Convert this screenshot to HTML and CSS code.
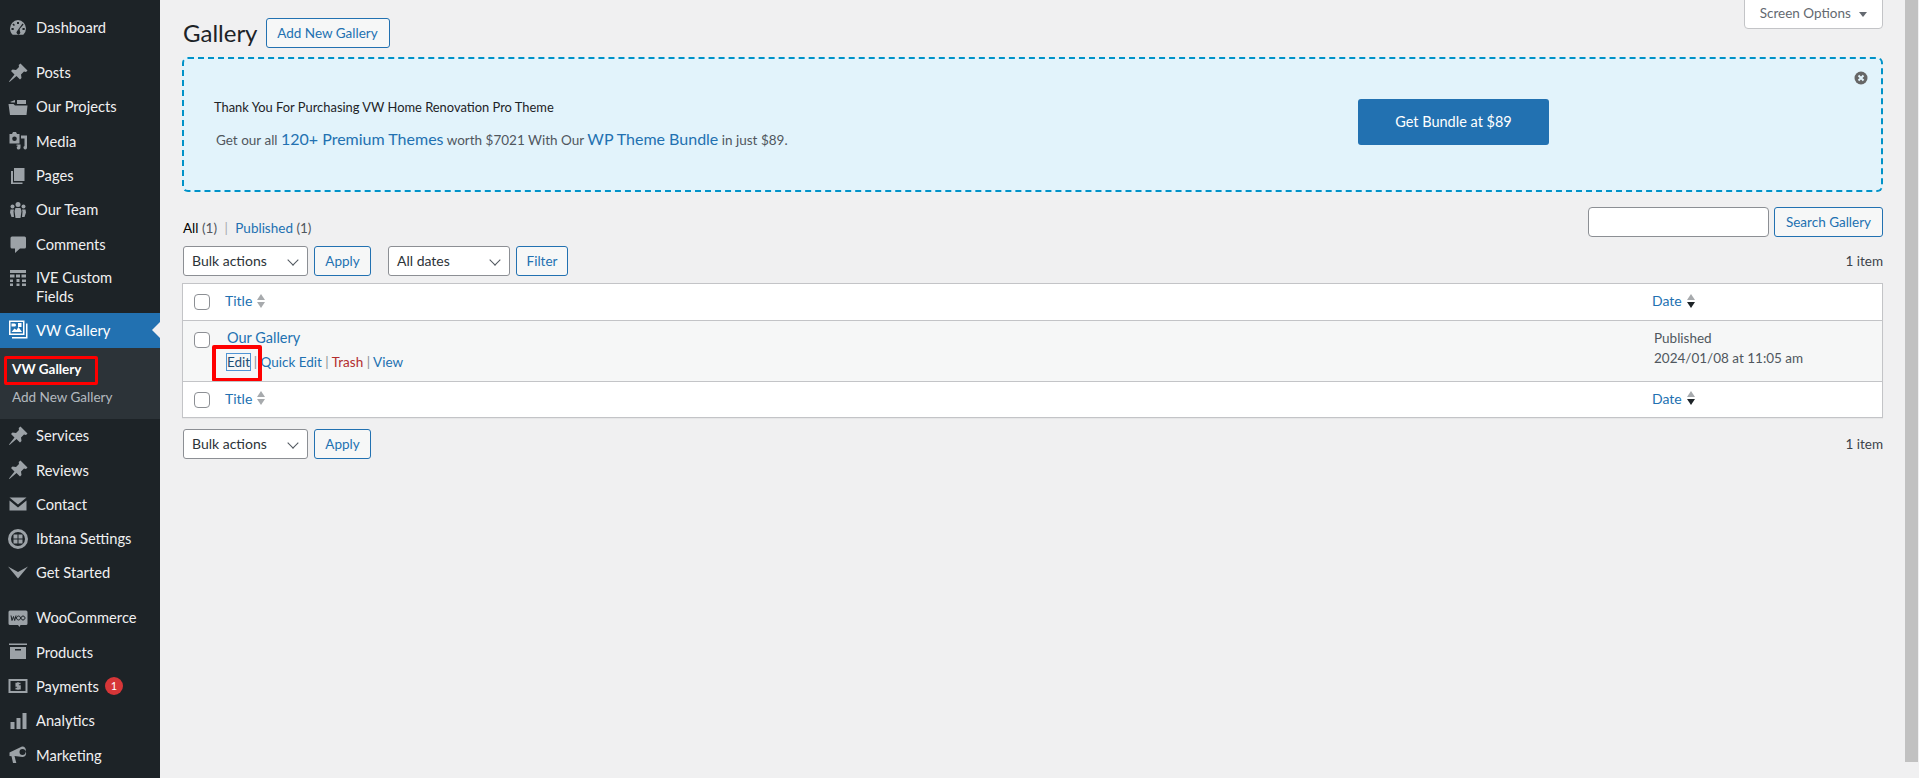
FILE: index.html
```html
<!DOCTYPE html>
<html lang="en">
<head>
<meta charset="utf-8">
<title>Gallery</title>
<link rel="stylesheet" href="styles.css">
</head>
<body>
<div class="shell">
  <nav class="menu">
    <a class="item first"><svg class="ic" viewBox="0 0 20 20"><path fill-rule="evenodd" d="M10 2a8.500 8.500 0 0 0-8 8.500c0 2.500 1 4.700 2.700 6.200h10.600A8.300 8.300 0 0 0 18 10.500 8.500 8.500 0 0 0 10 2zM9 4h2v2H9zM5.500 5.500l1.500 1.400-1.100 1.200-1.500-1.500zm9 0 1.100 1.100-4 4.400.4 2.500a1.900 1.900 0 1 1-3-.2zM3.500 10h2.200v2H3.500zm11 0h2.200v2h-2.200z"/></svg><span>Dashboard</span></a>
    <a class="item sep"><svg class="ic" viewBox="0 0 20 20"><use href="#pin"/></svg><span>Posts</span></a>
    <a class="item"><svg class="ic" viewBox="0 0 20 20"><path d="M.5 7h5l1.500 1.500h12.500l-1 9.500H2z"/><path d="M2 5l5-2v2.500H3.500zM9 3h9v4H9z"/></svg><span>Our Projects</span></a>
    <a class="item"><svg class="ic" viewBox="0 0 20 20"><path fill-rule="evenodd" d="M1.500 3h2.500l1-2h3l1 2h2.500v9.500h-10zm5 2.500a2.300 2.300 0 1 0 0 4.600 2.300 2.300 0 0 0 0-4.600z"/><path d="M13 4.500h6v12.200a1.800 1.800 0 1 1-2.500-1.700V7.500H13zM8.500 13.500h4v3.200a1.900 1.900 0 1 1-2.500-1.800V14.800H8.500z"/></svg><span>Media</span></a>
    <a class="item"><svg class="ic" viewBox="0 0 20 20"><path d="M6 2h10.500v13H6z"/><path d="M3 5h2v11.500h9.500V18H3z"/></svg><span>Pages</span></a>
    <a class="item"><svg class="ic" viewBox="0 0 20 20"><circle cx="10" cy="4.500" r="2.500"/><circle cx="4.500" cy="6.500" r="2"/><circle cx="15.500" cy="6.500" r="2"/><path d="M7.500 8h5l1 3-1 7H7.500l-1-7zM2.500 9.500h3.500l-.5 2 .5 5.500H3.500L2 12.500zM14 9.500h3.500l.5 3-1.500 4.500H14l.5-5.500z"/></svg><span>Our Team</span></a>
    <a class="item"><svg class="ic" viewBox="0 0 20 20"><path d="M4 2.500h12.500A1.500 1.500 0 0 1 18 4v9a1.500 1.500 0 0 1-1.500 1.500h-4.500L7 19v-4.500H4A1.500 1.500 0 0 1 2.500 13V4A1.500 1.500 0 0 1 4 2.500z"/></svg><span>Comments</span></a>
    <a class="item tall"><svg class="ic" viewBox="0 0 20 20"><path d="M2 2h16v3H2zM2 6.500h4.500v3H2zM8 6.500h4v3H8zM13.500 6.500H18v3h-4.500zM2 11.500h3v2.500H2zM8.500 11h3v3h-3zM14 11.500h4V14h-4zM2 15.500h3V18H2zM8.500 15.500h3V18h-3zM14 15.500h4V18h-4z"/></svg><span>IVE Custom Fields</span></a>
    <a class="item active"><svg class="ic" viewBox="0 0 20 20"><path fill-rule="evenodd" d="M1 .5h15.500V15H1zM2.500 2v11.500H15V2z"/><path d="M3.500 3.500h3a1.500 1.500 0 0 1 0 3h-3zM3.500 12l3-3.500 2 1.500 2-3 3.500 5z"/><path d="M10 3h3.500v4H10z"/><path d="M18 3.500V17H4v1.500h15.500V3.500z"/></svg><span>VW Gallery</span></a>
    <div class="sub">
      <a class="subitem current">VW Gallery</a>
      <a class="subitem">Add New Gallery</a>
      <i class="mark mark-sub"></i>
    </div>
    <a class="item"><svg class="ic" viewBox="0 0 20 20"><use href="#pin"/></svg><span>Services</span></a>
    <a class="item"><svg class="ic" viewBox="0 0 20 20"><use href="#pin"/></svg><span>Reviews</span></a>
    <a class="item"><svg class="ic" viewBox="0 0 20 20"><path d="M1.500 3.500h17L10 10.500zM1.500 6.500 10 13.500l8.500-7V16.500h-17z"/></svg><span>Contact</span></a>
    <a class="item"><svg class="ic" viewBox="0 0 20 20"><path fill-rule="evenodd" d="M10 0a10 10 0 1 0 0 20 10 10 0 0 0 0-20zm0 3a7 7 0 1 1 0 14 7 7 0 0 1 0-14z"/><path d="M5.500 5.500h4v4h-4zM10.500 5.500h4v4h-4zM5.500 10.500h4v4h-4zM10.500 10.500h4v4h-4z"/></svg><span>Ibtana Settings</span></a>
    <a class="item"><svg class="ic" viewBox="0 0 20 20"><path d="M0 3.500l10 5.500 10-5.500-10 12z"/></svg><span>Get Started</span></a>
    <a class="item sep"><svg class="ic" viewBox="0 0 20 20"><path d="M2 2.500h16a1.500 1.500 0 0 1 1.500 1.500v11.500A1.500 1.500 0 0 1 18 17h-5.500l-1 2-1.500-2H2A1.500 1.500 0 0 1 .5 15.500V4A1.500 1.500 0 0 1 2 2.500z"/><path class="cut" d="M3 7.500l1 5 1.500-4 1.200 4 1.300-5M10.500 8a2 2 0 1 0 .01 0zM15 8a2 2 0 1 0 .01 0z"/></svg><span>WooCommerce</span></a>
    <a class="item"><svg class="ic" viewBox="0 0 20 20"><path fill-rule="evenodd" d="M1 1.500h18V3H1zM2 5h16v12H2zm5 2v1.500h6V7z"/></svg><span>Products</span></a>
    <a class="item"><svg class="ic" viewBox="0 0 20 20"><path fill-rule="evenodd" d="M.5 3h19v14H.5zm2 2v10h15V5z"/><path class="cutb" d="M12.500 7.500H8.300v2.500h3.600v2.600H7.500M10 6.300v7.500"/></svg><span>Payments</span><b class="badge">1</b></a>
    <a class="item"><svg class="ic" viewBox="0 0 20 20"><path d="M2.500 11h4v7h-4zM8.500 7h4v11h-4zM14.500 2h4v16h-4z"/></svg><span>Analytics</span></a>
    <a class="item"><svg class="ic" viewBox="0 0 20 20"><path fill-rule="evenodd" d="M14 1.500a3.500 3.500 0 0 1 3.500 5 3.500 3.500 0 0 1-3 5.500L6.500 11l1.800 7H5L3.500 11.200 1.500 11V7.500zM14.500 4a3 3 0 0 0 0 6 3 3 0 0 0 0-6z"/></svg><span>Marketing</span></a>
  </nav>

  <main class="content">
    <a class="screen-options">Screen Options <i class="tri"></i></a>
    <header class="head">
      <h1>Gallery</h1>
      <a class="btn">Add New Gallery</a>
    </header>

    <section class="notice">
      <div class="notice-text">
        <p class="thanks">Thank You For Purchasing VW Home Renovation Pro Theme</p>
        <p class="offer">Get our all <a>120+ Premium Themes</a> worth $7021 With Our <a>WP Theme Bundle</a> in just $89.</p>
      </div>
      <a class="bundle">Get Bundle at $89</a>
      <svg class="close" viewBox="0 0 14 14"><circle cx="7" cy="7" r="6.500" fill="#666"/><path d="M4.500 4.500l5 5m0-5l-5 5" stroke="#e2f3fb" stroke-width="2"/></svg>
    </section>

    <div class="filterline">
      <div class="views"><b>All</b> (1) <em>|</em> <a>Published</a> (1)</div>
      <div class="search"><input class="input" type="text" aria-label="Search"><a class="btn">Search Gallery</a></div>
    </div>

    <div class="tablenav">
      <div class="sel w125">Bulk actions</div>
      <a class="btn">Apply</a>
      <div class="sel w122 gap-left">All dates</div>
      <a class="btn">Filter</a>
      <span class="count">1 item</span>
    </div>

    <div class="table">
      <div class="row thead">
        <i class="check"></i><a class="col-title">Title <i class="sort"><u></u><s></s></i></a>
        <a class="col-date">Date <i class="sort on"><u></u><s></s></i></a>
      </div>
      <div class="row body">
        <i class="check"></i>
        <div class="col-title cell">
          <a class="name">Our Gallery</a>
          <div class="actions"><a class="focus">Edit</a> <em>|</em> <a>Quick Edit</a> <em>|</em> <a class="trash">Trash</a> <em>|</em> <a>View</a></div>
          <i class="mark mark-edit"></i>
        </div>
        <div class="col-date cell date">Published<br>2024/01/08 at 11:05 am</div>
      </div>
      <div class="row tfoot">
        <i class="check"></i><a class="col-title">Title <i class="sort"><u></u><s></s></i></a>
        <a class="col-date">Date <i class="sort on"><u></u><s></s></i></a>
      </div>
    </div>

    <div class="tablenav bottom">
      <div class="sel w125">Bulk actions</div>
      <a class="btn">Apply</a>
      <span class="count">1 item</span>
    </div>
  </main>
  <div class="scrollbar"></div>
</div>
<svg class="defs" aria-hidden="true"><defs><symbol id="pin" viewBox="0 0 20 20"><path d="M12.500 .5l7 7-1.500 1.500-2-.5-3 3 .5 3.500-1.500 1.500-3.500-3.500L1.500 19 1 18.500l5.500-7L3 8l1.500-1.500 3.500.5 3-3-.3-2z"/></symbol></defs></svg>
</body>
</html>
```
FILE: styles.css
```css
* { box-sizing: border-box; }
html, body { margin: 0; height: 100%; overflow: hidden; }
body { background: #f0f0f1; font-family: "Lato", "Noto Sans", sans-serif; font-size: 13.5px; color: #3c434a; }
a { color: #2271b1; text-decoration: none; }
.defs { display: none; }
.shell { position: relative; display: flex; height: 778px; }

.menu { width: 160px; flex: none; background: #1d2327; padding-top: 10.500px; display: flex; flex-direction: column; }
.item { display: flex; align-items: center; height: 34.3px; color: #f0f0f1; font-size: 14.7px; line-height: 19px; padding-left: 8px; }
.item span { margin-left: 8px; }
.item.sep { margin-top: 10.700px; }
.item.tall { align-items: flex-start; padding-top: 7px; height: 52px; }
.item.tall span { width: 110px; }
.ic { width: 20px; height: 20px; flex: none; fill: #9ca2a7; }
.cut { fill: none; stroke: #1d2327; stroke-width: 1; }
.cutb { fill: none; stroke: #9ca2a7; stroke-width: 1.700; }
.active { background: #2271b1; color: #fff; position: relative; }
.active .ic { fill: #fff; }
.active::after { content: ""; position: absolute; right: 0; top: 9px; border: 8px solid transparent; border-right-color: #f0f0f1; border-left-width: 0; }
.sub { position: relative; background: #2c3338; height: 71px; padding-top: 7px; display: flex; flex-direction: column; }
.subitem { height: 28px; line-height: 28px; padding-left: 12px; font-size: 13.5px; color: rgba(240,246,252,.7); }
.subitem.current { color: #fff; font-weight: 700; }
.badge { margin-left: 6px; width: 18px; height: 18px; border-radius: 50%; background: #d63638; color: #fff; font-size: 11px; font-weight: 400; line-height: 18px; text-align: center; }

.mark { position: absolute; border: 3px solid #f00; border-radius: 2px; }
.mark-sub { left: 4px; top: 8px; width: 94px; height: 29px; }
.mark-edit { left: -13px; top: 24px; width: 50px; height: 37px; border-width: 4px; }

.content { position: relative; flex: 1; min-width: 0; padding: 0 36px 0 22px; }
.screen-options { position: absolute; right: 36px; top: -1px; width: 139px; height: 30px; background: #fff; border: 1px solid #c3c4c7; border-radius: 0 0 4px 4px; color: #646970; line-height: 27px; text-align: center; }
.tri { display: inline-block; margin-left: 5px; border: 4px solid transparent; border-top: 5px solid #646970; border-bottom: 0; vertical-align: 1px; }
.head { display: flex; align-items: center; height: 30px; margin-top: 18px; padding-left: 1px; }
h1 { margin: 0 8px 0 0; font-size: 24px; font-weight: 400; color: #1d2327; line-height: 30px; }
.btn { display: inline-block; height: 30px; line-height: 28px; padding: 0 10px; border: 1px solid #2271b1; border-radius: 3px; background: #f6f7f7; color: #2271b1; white-space: nowrap; }
.head .btn { width: 124px; padding: 0; text-align: center; }

.notice { position: relative; margin-top: 9px; height: 135px; display: flex; align-items: center; border: 2px dashed #0092c8; border-radius: 6px; background: #e2f3fb; padding-left: 30px; }
.notice-text { width: 1144px; margin-top: -1px; }
.notice p { margin: 0; }
.thanks { color: #1d2327; font-size: 12.900px; line-height: 18px; }
.offer { margin-top: 13px !important; padding-left: 2px; font-size: 13.5px; line-height: 20px; color: #50575e; }
.offer a { font-size: 16px; color: #2271b1; }
.bundle { display: block; width: 191px; height: 46px; line-height: 46px; text-align: center; background: #2271b1; border-radius: 3px; color: #fff; font-size: 14.5px; margin-top: -6px; }
.close { position: absolute; right: 13px; top: 12px; width: 14px; height: 14px; }

.filterline { display: flex; justify-content: space-between; align-items: flex-start; height: 30px; margin-top: 15px; padding-left: 1px; }
.views { padding-top: 13px; color: #50575e; }
.views b { font-weight: 400; color: #000; }
.views em { font-style: normal; color: #a7aaad; padding: 0 4px; }
.search { display: flex; gap: 5px; }
.input { width: 181px; height: 30px; background: #fff; border: 1px solid #8c8f94; border-radius: 4px; }
.search .btn { width: 109px; padding: 0; text-align: center; }

.tablenav { display: flex; align-items: center; gap: 6px; height: 30px; margin-top: 9px; padding-left: 1px; }
.tablenav .btn { width: 57px; padding: 0; text-align: center; }
.sel { position: relative; height: 30px; line-height: 28px; padding-left: 8px; border: 1px solid #8c8f94; border-radius: 3px; background: #fff; color: #2c3338; font-size: 14px; }
.sel::after { content: ""; position: absolute; right: 10px; top: 9px; width: 7px; height: 7px; border: solid #50575e; border-width: 0 1.700px 1.700px 0; transform: rotate(45deg); }
.w125 { width: 125px; }
.w122 { width: 122px; }
.gap-left { margin-left: 11px; }
.tablenav .gap-left + .btn { width: 52px; }
.count { margin-left: auto; color: #3c434a; }

.table { margin-top: 7px; height: 135px; background: #fff; border: 1px solid #c3c4c7; box-shadow: 0 1px 1px rgba(0,0,0,.04); }
.row { position: relative; display: grid; grid-template-columns: 42px 1fr 230px; align-items: center; }
.row > a { display: flex; align-items: center; gap: 5px; font-size: 14px; padding-bottom: 3px; }
.thead { height: 37px; border-bottom: 1px solid #c3c4c7; }
.tfoot { height: 36px; border-top: 1px solid #c3c4c7; }
.body { height: 60px; background: #f6f7f7; align-items: start; }
.check { width: 16px; height: 16px; margin-left: 11px; background: #fff; border: 1px solid #8c8f94; border-radius: 4px; }
.body .check { margin-top: 11px; }
.cell { position: relative; font-size: 13.5px; }
.name { display: block; margin: 8px 0 0 2px; font-size: 14.5px; line-height: 18px; }
.actions { margin: 6px 0 0 2px; line-height: 18px; color: #2271b1; }
.actions em { font-style: normal; color: #8c8f94; }
.focus { color: #1d4e75; outline: 1px solid #4f94d4; }
.trash { color: #b32d2e; }
.date { padding: 7px 0 0 2px; line-height: 20px; color: #50575e; }
.sort { display: inline-flex; flex-direction: column; gap: 2px; }
.sort u, .sort s { display: block; border: 4px solid transparent; }
.sort u { border-top: 0; border-bottom: 6px solid #a7aaad; }
.sort s { border-bottom: 0; border-top: 6px solid #a7aaad; }
.sort.on s { border-top-color: #1d2327; }

.tablenav.bottom { margin-top: 11px; }
.scrollbar { position: absolute; right: 1px; top: 0; width: 13px; height: 762px; background: #c1c1c1; }
```
